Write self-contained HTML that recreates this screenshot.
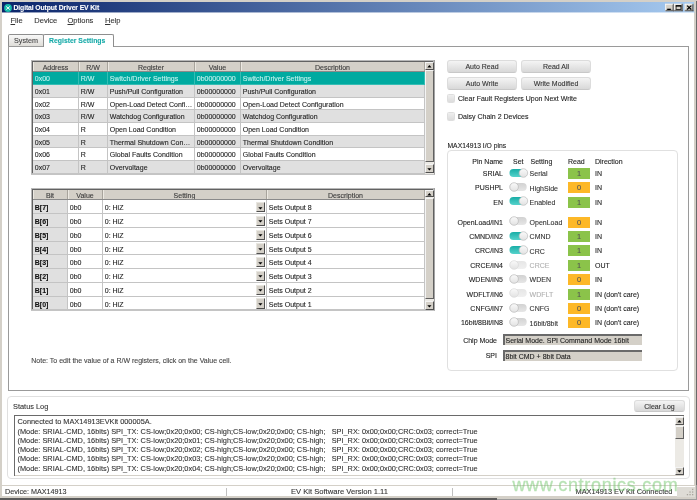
<!DOCTYPE html><html><head><meta charset="utf-8"><title>Digital Output Driver EV Kit</title><style>
*{box-sizing:border-box;margin:0;padding:0}
html,body{width:697px;height:500px;overflow:hidden;background:#fff}
body{position:relative;font-family:"Liberation Sans",Arial,sans-serif;font-size:7px;color:#222;-webkit-text-stroke:0.1px currentColor}
.a{position:absolute;white-space:nowrap}
.fr{background:#d4d0c8}
.bottom{left:0;top:498.4px;width:497px;height:2px;background:#5b5b5b}
.title{left:2px;top:2px;width:692.4px;height:10.4px;background:linear-gradient(90deg,#0a246a,#a6caf0)}
.title span{position:absolute;left:11.5px;top:0.6px;line-height:10.4px;font-size:6.8px;font-weight:bold;color:#fff;letter-spacing:-0.1px}
.wb{top:3.6px;width:8.6px;height:7.4px;background:#d4d0c8;border:1px solid;border-color:#fff #404040 #404040 #fff}
.menu{top:16px;line-height:10px;font-size:7.5px;color:#333}
.tab{border:1px solid #8e8e8e;border-bottom:none;border-radius:2px 2px 0 0;text-align:center}
.panel{left:8px;top:46px;width:681px;height:345px;border:1px solid #9a9a9a;background:#fff}
.grid{background:#b8b8b8;overflow:hidden;border-right:1px solid #a4a4a4;border-bottom:1px solid #c4c4c4}
.gi{left:1.7px;top:1.7px;background:#fff;overflow:hidden;box-shadow:-1px -1px 0 0 #626262}
.hd{background:#d4d0c8;border-bottom:1px solid #8a8a8a;left:0;top:0}
.hc{top:0;text-align:center;border-right:1px solid #a8a49c;box-shadow:inset 1px 0 0 #ece9e2;color:#3a3a3a;overflow:hidden}
.rw{left:0}
.c{top:0;height:100%;overflow:hidden;text-overflow:ellipsis;padding-left:1.8px;border-right:1px solid #c4c4c4;border-bottom:1px solid #c4c4c4}
.sel .c{border-color:#35bdb4;color:#c0f2ee}
.sb{background:#eceae5}
.sbb{left:0;width:8.6px;background:#d4d0c8;border:1px solid;border-color:#f4f4f4 #505050 #505050 #f4f4f4}
.thumb{left:0;width:8.6px;background:#d4d0c8;border:1px solid;border-color:#f4f4f4 #606060 #606060 #f4f4f4}
.btn{height:13px;border:1px solid #dcdcdc;border-bottom-color:#c8c8c8;border-radius:3px;background:linear-gradient(#f4f4f4,#d8d8d8);text-align:center;line-height:12px;font-size:7px;color:#333}
.cb{width:8px;height:9px;border:1px solid #dedede;border-radius:1.5px;background:linear-gradient(#eeeeee,#dcdcdc)}
.gb{border:1px solid #e0e0e0;border-radius:4px}
.tg{width:17.8px;height:8.6px;border-radius:4.3px}
.tg.on{background:linear-gradient(90deg,#1aa9a3,#5cc7c2)}
.tg.off{background:#d6d6d6}
.tg.dis{background:#e8e8e8}
.tg i{position:absolute;top:0;width:8.6px;height:8.6px;border-radius:50%;background:#fff;border:1px solid #bcbcbc}
.tg.dis i{border-color:#d4d4d4}
.tg.on i{right:0}.tg.off i,.tg.dis i{left:0}
.rd{left:568px;width:22px;height:11px;text-align:center;line-height:11px;font-size:7.4px;color:#555}
.g{background:#8bc34a}.o{background:#fdb827}
.tb{left:503px;width:138.5px;height:10.6px;background:#6a6a6a;font-size:7px}
.tb span{position:absolute;left:1.5px;top:1.5px;right:0;bottom:0;background:#d4d0c8;line-height:9px;padding-left:1px}
.log{left:14px;top:415px;width:670.4px;height:61px;background:#6a6a6a}
.log span{position:absolute;left:1px;top:1px;right:0;bottom:0;background:#fff;border-right:1px solid #d4d0c8;border-bottom:1px solid #d4d0c8}
.ll{left:17.5px;font-size:7.36px;line-height:9.3px;color:#333}
.sbar{left:1.6px;top:485px;width:693px;height:11.4px;border-top:1px solid #d4d0c8;background:#fff}
.t{line-height:9px;font-size:7px}
</style></head><body><div id="root" style="position:absolute;left:0;top:0;width:697px;height:500px;will-change:transform">
<svg width="0" height="0" style="position:absolute"><defs><linearGradient id="gon" x1="0" y1="0" x2="0" y2="1"><stop offset="0" stop-color="#1aaea7"/><stop offset="1" stop-color="#55d2cb"/></linearGradient><linearGradient id="gof" x1="0" y1="0" x2="0" y2="1"><stop offset="0" stop-color="#d2d2d2"/><stop offset="1" stop-color="#e6e6e6"/></linearGradient><linearGradient id="gdi" x1="0" y1="0" x2="0" y2="1"><stop offset="0" stop-color="#e6e6e6"/><stop offset="1" stop-color="#f0f0f0"/></linearGradient><linearGradient id="gk" x1="0" y1="0" x2="0" y2="1"><stop offset="0" stop-color="#fafafa"/><stop offset="1" stop-color="#e2e2e2"/></linearGradient></defs></svg>
<div class="a fr" style="left:0;top:0;width:697px;height:2.4px"></div><div class="a fr" style="left:0;top:0;width:2px;height:498.4px"></div><div class="a fr" style="left:694px;top:0;width:3px;height:498.4px"></div><div class="a fr" style="left:0;top:496.4px;width:697px;height:2px"></div><div class="a bottom"></div><div class="a" style="left:696px;top:1px;width:1px;height:484px;background:#6a6a6a"></div><div class="a" style="left:696px;top:485px;width:1px;height:15px;background:#9c9c9c"></div><div class="a" style="left:497px;top:498px;width:199px;height:1px;background:#d4d0c8"></div><div class="a" style="left:497px;top:499px;width:200px;height:1px;background:#9c9c9c"></div>
<div class="a" style="left:2px;top:12px;width:692.6px;height:1px;opacity:.45;background:linear-gradient(90deg,#0a246a,#a6caf0)"></div>
<div class="a title"><svg class="a" style="left:1.75px;top:1.6px" width="8" height="8" viewBox="0 0 8 8"><circle cx="4" cy="4" r="3.9" fill="#18bcab"/><path d="M2.2 2.4 L5.8 5.6 M5.8 2.4 L2.2 5.6" stroke="#fff" stroke-width="0.9" fill="none"/></svg><span>Digital Output Driver EV Kit</span></div>
<svg class="a" style="left:665px;top:3px" width="30" height="10" viewBox="0 -0.4 30 10"><rect x="0.3" y="0.4" width="8.7" height="7.4" fill="#d4d0c8"/><rect x="0.3" y="0.4" width="8.7" height="0.8" fill="#fff"/><rect x="0.3" y="0.4" width="0.8" height="7.4" fill="#fff"/><rect x="7.40" y="1.2000000000000002" width="0.8" height="5.80" fill="#808080"/><rect x="1.10" y="6.20" width="7.10" height="0.8" fill="#808080"/><rect x="8.20" y="0.4" width="0.8" height="7.4" fill="#404040"/><rect x="0.3" y="7.00" width="8.7" height="0.8" fill="#404040"/><rect x="8.9" y="0.4" width="8.7" height="7.4" fill="#d4d0c8"/><rect x="8.9" y="0.4" width="8.7" height="0.8" fill="#fff"/><rect x="8.9" y="0.4" width="0.8" height="7.4" fill="#fff"/><rect x="16.00" y="1.2000000000000002" width="0.8" height="5.80" fill="#808080"/><rect x="9.70" y="6.20" width="7.10" height="0.8" fill="#808080"/><rect x="16.80" y="0.4" width="0.8" height="7.4" fill="#404040"/><rect x="8.9" y="7.00" width="8.7" height="0.8" fill="#404040"/><rect x="19.7" y="0.4" width="8.7" height="7.4" fill="#d4d0c8"/><rect x="19.7" y="0.4" width="8.7" height="0.8" fill="#fff"/><rect x="19.7" y="0.4" width="0.8" height="7.4" fill="#fff"/><rect x="26.80" y="1.2000000000000002" width="0.8" height="5.80" fill="#808080"/><rect x="20.50" y="6.20" width="7.10" height="0.8" fill="#808080"/><rect x="27.60" y="0.4" width="0.8" height="7.4" fill="#404040"/><rect x="19.7" y="7.00" width="8.7" height="0.8" fill="#404040"/><rect x="2.2" y="5.3" width="3.6" height="1.3" fill="#000"/><rect x="11.1" y="2.3" width="4.8" height="3.9" fill="none" stroke="#000" stroke-width="0.7"/><rect x="10.75" y="1.9" width="5.5" height="1.3" fill="#000"/><path d="M22.1 2.2 L26.3 6.1 M26.3 2.2 L22.1 6.1" stroke="#000" stroke-width="1.15" fill="none"/></svg>
<div class="a menu" style="left:10.5px"><u>F</u>ile</div>
<div class="a menu" style="left:34.3px">Device</div>
<div class="a menu" style="left:67.5px"><u>O</u>ptions</div>
<div class="a menu" style="left:105px"><u>H</u>elp</div>
<div class="a tab" style="left:8px;top:34px;width:36px;height:12.5px;background:linear-gradient(#f8f8f8,#dddbd6);line-height:12px;font-size:7.2px;color:#444">System</div>
<div class="a panel"></div>
<div class="a tab" style="left:43px;top:33.5px;width:71px;height:13.5px;background:#fff;line-height:12.5px;font-size:6.85px;font-weight:bold;color:#16aaa8;padding-right:2.6px">Register Settings</div>
<div class="a grid" style="left:31.3px;top:60.3px;width:403.70px;height:114.42px;box-sizing:border-box"><div class="a gi" style="width:401.00px;height:111.72px">
<div class="a hd" style="width:392.00px;height:10.2px">
<div class="a hc" style="left:0.00px;width:46.00px;height:9.2px;line-height:11.399999999999999px">Address</div>
<div class="a hc" style="left:46.00px;width:29.00px;height:9.2px;line-height:11.399999999999999px">R/W</div>
<div class="a hc" style="left:75.00px;width:87.00px;height:9.2px;line-height:11.399999999999999px">Register</div>
<div class="a hc" style="left:162.00px;width:46.00px;height:9.2px;line-height:11.399999999999999px">Value</div>
<div class="a hc" style="left:208.00px;width:184.00px;height:9.2px;line-height:11.399999999999999px">Description</div>
</div>
<div class="a rw sel" style="top:10.20px;width:392.00px;height:12.69px;line-height:13.99px;background:#00aaa0">
<div class="a c" style="left:0.00px;width:46.00px;">0x00</div>
<div class="a c" style="left:46.00px;width:29.00px;">R/W</div>
<div class="a c" style="left:75.00px;width:87.00px;">Switch/Driver Settings</div>
<div class="a c" style="left:162.00px;width:46.00px;">0b00000000</div>
<div class="a c" style="left:208.00px;width:184.00px;">Switch/Driver Settings</div>
</div>
<div class="a rw " style="top:22.89px;width:392.00px;height:12.69px;line-height:13.99px;background:#e0e0e0">
<div class="a c" style="left:0.00px;width:46.00px;">0x01</div>
<div class="a c" style="left:46.00px;width:29.00px;">R/W</div>
<div class="a c" style="left:75.00px;width:87.00px;">Push/Pull Configuration</div>
<div class="a c" style="left:162.00px;width:46.00px;">0b00000000</div>
<div class="a c" style="left:208.00px;width:184.00px;">Push/Pull Configuration</div>
</div>
<div class="a rw " style="top:35.58px;width:392.00px;height:12.69px;line-height:13.99px;background:#fff">
<div class="a c" style="left:0.00px;width:46.00px;">0x02</div>
<div class="a c" style="left:46.00px;width:29.00px;">R/W</div>
<div class="a c" style="left:75.00px;width:87.00px;">Open-Load Detect Configuration</div>
<div class="a c" style="left:162.00px;width:46.00px;">0b00000000</div>
<div class="a c" style="left:208.00px;width:184.00px;">Open-Load Detect Configuration</div>
</div>
<div class="a rw " style="top:48.27px;width:392.00px;height:12.69px;line-height:13.99px;background:#e0e0e0">
<div class="a c" style="left:0.00px;width:46.00px;">0x03</div>
<div class="a c" style="left:46.00px;width:29.00px;">R/W</div>
<div class="a c" style="left:75.00px;width:87.00px;">Watchdog Configuration</div>
<div class="a c" style="left:162.00px;width:46.00px;">0b00000000</div>
<div class="a c" style="left:208.00px;width:184.00px;">Watchdog Configuration</div>
</div>
<div class="a rw " style="top:60.96px;width:392.00px;height:12.69px;line-height:13.99px;background:#fff">
<div class="a c" style="left:0.00px;width:46.00px;">0x04</div>
<div class="a c" style="left:46.00px;width:29.00px;">R</div>
<div class="a c" style="left:75.00px;width:87.00px;">Open Load Condition</div>
<div class="a c" style="left:162.00px;width:46.00px;">0b00000000</div>
<div class="a c" style="left:208.00px;width:184.00px;">Open Load Condition</div>
</div>
<div class="a rw " style="top:73.65px;width:392.00px;height:12.69px;line-height:13.99px;background:#e0e0e0">
<div class="a c" style="left:0.00px;width:46.00px;">0x05</div>
<div class="a c" style="left:46.00px;width:29.00px;">R</div>
<div class="a c" style="left:75.00px;width:87.00px;">Thermal Shutdown Condition</div>
<div class="a c" style="left:162.00px;width:46.00px;">0b00000000</div>
<div class="a c" style="left:208.00px;width:184.00px;">Thermal Shutdown Condition</div>
</div>
<div class="a rw " style="top:86.34px;width:392.00px;height:12.69px;line-height:13.99px;background:#fff">
<div class="a c" style="left:0.00px;width:46.00px;">0x06</div>
<div class="a c" style="left:46.00px;width:29.00px;">R</div>
<div class="a c" style="left:75.00px;width:87.00px;">Global Faults Condition</div>
<div class="a c" style="left:162.00px;width:46.00px;">0b00000000</div>
<div class="a c" style="left:208.00px;width:184.00px;">Global Faults Condition</div>
</div>
<div class="a rw " style="top:99.03px;width:392.00px;height:12.69px;line-height:13.99px;background:#e0e0e0">
<div class="a c" style="left:0.00px;width:46.00px;">0x07</div>
<div class="a c" style="left:46.00px;width:29.00px;">R</div>
<div class="a c" style="left:75.00px;width:87.00px;">Overvoltage</div>
<div class="a c" style="left:162.00px;width:46.00px;">0b00000000</div>
<div class="a c" style="left:208.00px;width:184.00px;">Overvoltage</div>
</div>
<div class="a sb" style="left:392.00px;top:0;width:9px;height:111.72px">
<div class="a sbb" style="top:0.2px;height:7.6px"><svg class="a" style="left:0;top:0" width="7" height="7" viewBox="0 0 7 7"><path d="M1.3 4.4 L5.5 4.4 L3.4 2.1 Z" fill="#000"/></svg></div>
<div class="a thumb" style="top:8px;height:92.22px"></div>
<div class="a sbb" style="top:102.32px;height:9px"><span class="a" style="left:0;top:0.8px"><svg class="a" style="left:0;top:0" width="7" height="7" viewBox="0 0 7 7"><path d="M1.3 2.3 L5.5 2.3 L3.4 4.6 Z" fill="#000"/></svg></span></div>
</div></div></div>
<div class="a grid" style="left:31.3px;top:188px;width:403.70px;height:123.40px;box-sizing:border-box"><div class="a gi" style="width:401.00px;height:120.70px">
<div class="a hd" style="width:392.00px;height:10.7px">
<div class="a hc" style="left:0.00px;width:35.00px;height:9.7px;line-height:11.899999999999999px">Bit</div>
<div class="a hc" style="left:35.00px;width:35.00px;height:9.7px;line-height:11.899999999999999px">Value</div>
<div class="a hc" style="left:70.00px;width:164.00px;height:9.7px;line-height:11.899999999999999px">Setting</div>
<div class="a hc" style="left:234.00px;width:158.00px;height:9.7px;line-height:11.899999999999999px">Description</div>
</div>
<div class="a rw " style="top:10.70px;width:392.00px;height:13.75px;line-height:15.05px;background:#fff">
<div class="a c" style="left:0.00px;width:35.00px;background:#e0e0e0;font-weight:bold;color:#111">B[7]</div>
<div class="a c" style="left:35.00px;width:35.00px;">0b0</div>
<div class="a c" style="left:70.00px;width:164.00px;">0: HiZ<span class="a" style="right:1px;top:1.7px;width:9px;height:10.2px;background:#d4d0c8;border:1px solid;border-color:#e8e6e0 #505050 #505050 #e8e6e0"><span class="a" style="left:0px;top:1.5px;width:7px;height:7px"><svg class="a" style="left:0;top:0" width="7" height="7" viewBox="0 0 7 7"><path d="M1.3 2.3 L5.5 2.3 L3.4 4.6 Z" fill="#000"/></svg></span></span></div>
<div class="a c" style="left:234.00px;width:158.00px;">Sets Output 8</div>
</div>
<div class="a rw " style="top:24.45px;width:392.00px;height:13.75px;line-height:15.05px;background:#fff">
<div class="a c" style="left:0.00px;width:35.00px;background:#e0e0e0;font-weight:bold;color:#111">B[6]</div>
<div class="a c" style="left:35.00px;width:35.00px;">0b0</div>
<div class="a c" style="left:70.00px;width:164.00px;">0: HiZ<span class="a" style="right:1px;top:1.7px;width:9px;height:10.2px;background:#d4d0c8;border:1px solid;border-color:#e8e6e0 #505050 #505050 #e8e6e0"><span class="a" style="left:0px;top:1.5px;width:7px;height:7px"><svg class="a" style="left:0;top:0" width="7" height="7" viewBox="0 0 7 7"><path d="M1.3 2.3 L5.5 2.3 L3.4 4.6 Z" fill="#000"/></svg></span></span></div>
<div class="a c" style="left:234.00px;width:158.00px;">Sets Output 7</div>
</div>
<div class="a rw " style="top:38.20px;width:392.00px;height:13.75px;line-height:15.05px;background:#fff">
<div class="a c" style="left:0.00px;width:35.00px;background:#e0e0e0;font-weight:bold;color:#111">B[5]</div>
<div class="a c" style="left:35.00px;width:35.00px;">0b0</div>
<div class="a c" style="left:70.00px;width:164.00px;">0: HiZ<span class="a" style="right:1px;top:1.7px;width:9px;height:10.2px;background:#d4d0c8;border:1px solid;border-color:#e8e6e0 #505050 #505050 #e8e6e0"><span class="a" style="left:0px;top:1.5px;width:7px;height:7px"><svg class="a" style="left:0;top:0" width="7" height="7" viewBox="0 0 7 7"><path d="M1.3 2.3 L5.5 2.3 L3.4 4.6 Z" fill="#000"/></svg></span></span></div>
<div class="a c" style="left:234.00px;width:158.00px;">Sets Output 6</div>
</div>
<div class="a rw " style="top:51.95px;width:392.00px;height:13.75px;line-height:15.05px;background:#fff">
<div class="a c" style="left:0.00px;width:35.00px;background:#e0e0e0;font-weight:bold;color:#111">B[4]</div>
<div class="a c" style="left:35.00px;width:35.00px;">0b0</div>
<div class="a c" style="left:70.00px;width:164.00px;">0: HiZ<span class="a" style="right:1px;top:1.7px;width:9px;height:10.2px;background:#d4d0c8;border:1px solid;border-color:#e8e6e0 #505050 #505050 #e8e6e0"><span class="a" style="left:0px;top:1.5px;width:7px;height:7px"><svg class="a" style="left:0;top:0" width="7" height="7" viewBox="0 0 7 7"><path d="M1.3 2.3 L5.5 2.3 L3.4 4.6 Z" fill="#000"/></svg></span></span></div>
<div class="a c" style="left:234.00px;width:158.00px;">Sets Output 5</div>
</div>
<div class="a rw " style="top:65.70px;width:392.00px;height:13.75px;line-height:15.05px;background:#fff">
<div class="a c" style="left:0.00px;width:35.00px;background:#e0e0e0;font-weight:bold;color:#111">B[3]</div>
<div class="a c" style="left:35.00px;width:35.00px;">0b0</div>
<div class="a c" style="left:70.00px;width:164.00px;">0: HiZ<span class="a" style="right:1px;top:1.7px;width:9px;height:10.2px;background:#d4d0c8;border:1px solid;border-color:#e8e6e0 #505050 #505050 #e8e6e0"><span class="a" style="left:0px;top:1.5px;width:7px;height:7px"><svg class="a" style="left:0;top:0" width="7" height="7" viewBox="0 0 7 7"><path d="M1.3 2.3 L5.5 2.3 L3.4 4.6 Z" fill="#000"/></svg></span></span></div>
<div class="a c" style="left:234.00px;width:158.00px;">Sets Output 4</div>
</div>
<div class="a rw " style="top:79.45px;width:392.00px;height:13.75px;line-height:15.05px;background:#fff">
<div class="a c" style="left:0.00px;width:35.00px;background:#e0e0e0;font-weight:bold;color:#111">B[2]</div>
<div class="a c" style="left:35.00px;width:35.00px;">0b0</div>
<div class="a c" style="left:70.00px;width:164.00px;">0: HiZ<span class="a" style="right:1px;top:1.7px;width:9px;height:10.2px;background:#d4d0c8;border:1px solid;border-color:#e8e6e0 #505050 #505050 #e8e6e0"><span class="a" style="left:0px;top:1.5px;width:7px;height:7px"><svg class="a" style="left:0;top:0" width="7" height="7" viewBox="0 0 7 7"><path d="M1.3 2.3 L5.5 2.3 L3.4 4.6 Z" fill="#000"/></svg></span></span></div>
<div class="a c" style="left:234.00px;width:158.00px;">Sets Output 3</div>
</div>
<div class="a rw " style="top:93.20px;width:392.00px;height:13.75px;line-height:15.05px;background:#fff">
<div class="a c" style="left:0.00px;width:35.00px;background:#e0e0e0;font-weight:bold;color:#111">B[1]</div>
<div class="a c" style="left:35.00px;width:35.00px;">0b0</div>
<div class="a c" style="left:70.00px;width:164.00px;">0: HiZ<span class="a" style="right:1px;top:1.7px;width:9px;height:10.2px;background:#d4d0c8;border:1px solid;border-color:#e8e6e0 #505050 #505050 #e8e6e0"><span class="a" style="left:0px;top:1.5px;width:7px;height:7px"><svg class="a" style="left:0;top:0" width="7" height="7" viewBox="0 0 7 7"><path d="M1.3 2.3 L5.5 2.3 L3.4 4.6 Z" fill="#000"/></svg></span></span></div>
<div class="a c" style="left:234.00px;width:158.00px;">Sets Output 2</div>
</div>
<div class="a rw " style="top:106.95px;width:392.00px;height:13.75px;line-height:15.05px;background:#fff">
<div class="a c" style="left:0.00px;width:35.00px;background:#e0e0e0;font-weight:bold;color:#111">B[0]</div>
<div class="a c" style="left:35.00px;width:35.00px;">0b0</div>
<div class="a c" style="left:70.00px;width:164.00px;">0: HiZ<span class="a" style="right:1px;top:1.7px;width:9px;height:10.2px;background:#d4d0c8;border:1px solid;border-color:#e8e6e0 #505050 #505050 #e8e6e0"><span class="a" style="left:0px;top:1.5px;width:7px;height:7px"><svg class="a" style="left:0;top:0" width="7" height="7" viewBox="0 0 7 7"><path d="M1.3 2.3 L5.5 2.3 L3.4 4.6 Z" fill="#000"/></svg></span></span></div>
<div class="a c" style="left:234.00px;width:158.00px;">Sets Output 1</div>
</div>
<div class="a sb" style="left:392.00px;top:0;width:9px;height:120.70px">
<div class="a sbb" style="top:0.2px;height:7.6px"><svg class="a" style="left:0;top:0" width="7" height="7" viewBox="0 0 7 7"><path d="M1.3 4.4 L5.5 4.4 L3.4 2.1 Z" fill="#000"/></svg></div>
<div class="a thumb" style="top:8px;height:101.20px"></div>
<div class="a sbb" style="top:111.30px;height:9px"><span class="a" style="left:0;top:0.8px"><svg class="a" style="left:0;top:0" width="7" height="7" viewBox="0 0 7 7"><path d="M1.3 2.3 L5.5 2.3 L3.4 4.6 Z" fill="#000"/></svg></span></div>
</div></div></div>
<div class="a t" style="left:31.3px;top:356px;font-size:7px;color:#444">Note: To edit the value of a R/W registers, click on the Value cell.</div>
<div class="a btn" style="left:447px;top:60px;width:70px">Auto Read</div>
<div class="a btn" style="left:521px;top:60px;width:70px">Read All</div>
<div class="a btn" style="left:447px;top:77px;width:70px">Auto Write</div>
<div class="a btn" style="left:521px;top:77px;width:70px">Write Modified</div>
<div class="a cb" style="left:447px;top:94px"></div><div class="a t" style="left:458px;top:93.7px">Clear Fault Registers Upon Next Write</div>
<div class="a cb" style="left:447px;top:111.5px"></div><div class="a t" style="left:458px;top:111.5px">Daisy Chain 2 Devices</div>
<div class="a t" style="left:447.5px;top:140.7px;font-size:6.75px">MAX14913 I/O pins</div>
<div class="a gb" style="left:447px;top:150.4px;width:231px;height:220.6px"></div>
<div class="a t" style="right:194px;top:157px">Pin Name</div>
<div class="a t" style="left:513px;top:157px">Set</div>
<div class="a t" style="left:530.5px;top:157px">Setting</div>
<div class="a t" style="left:568px;top:157px">Read</div>
<div class="a t" style="left:595px;top:157px">Direction</div>
<div class="a t" style="right:194px;top:168.8px">SRIAL</div>
<svg class="a" style="left:509px;top:167.6px" width="20" height="10" viewBox="0 0 20 10"><rect x="0.5" y="1.1" width="17.2" height="7.8" rx="3.9" fill="url(#gon)"/><circle cx="14.4" cy="5" r="4.3" fill="url(#gk)" stroke="#b8b8b8" stroke-width="0.65"/></svg>
<div class="a t" style="left:529.6px;top:169.0px;color:#333">Serial</div>
<div class="a rd g" style="top:167.8px">1</div>
<div class="a t" style="left:595px;top:168.8px">IN</div>
<div class="a t" style="right:194px;top:183.3px">PUSHPL</div>
<svg class="a" style="left:509px;top:182.1px" width="20" height="10" viewBox="0 0 20 10"><rect x="0.5" y="1.1" width="17.2" height="7.8" rx="3.9" fill="url(#gof)"/><circle cx="5.1" cy="5" r="4.3" fill="url(#gk)" stroke="#b8b8b8" stroke-width="0.65"/></svg>
<div class="a t" style="left:529.6px;top:183.5px;color:#333">HighSide</div>
<div class="a rd o" style="top:182.3px">0</div>
<div class="a t" style="left:595px;top:183.3px">IN</div>
<div class="a t" style="right:194px;top:197.6px">EN</div>
<svg class="a" style="left:509px;top:196.4px" width="20" height="10" viewBox="0 0 20 10"><rect x="0.5" y="1.1" width="17.2" height="7.8" rx="3.9" fill="url(#gon)"/><circle cx="14.4" cy="5" r="4.3" fill="url(#gk)" stroke="#b8b8b8" stroke-width="0.65"/></svg>
<div class="a t" style="left:529.6px;top:197.79999999999998px;color:#333">Enabled</div>
<div class="a rd g" style="top:196.6px">1</div>
<div class="a t" style="left:595px;top:197.6px">IN</div>
<div class="a t" style="right:194px;top:217.5px">OpenLoad/IN1</div>
<svg class="a" style="left:509px;top:216.3px" width="20" height="10" viewBox="0 0 20 10"><rect x="0.5" y="1.1" width="17.2" height="7.8" rx="3.9" fill="url(#gof)"/><circle cx="5.1" cy="5" r="4.3" fill="url(#gk)" stroke="#b8b8b8" stroke-width="0.65"/></svg>
<div class="a t" style="left:529.6px;top:217.7px;color:#333">OpenLoad</div>
<div class="a rd o" style="top:216.5px">0</div>
<div class="a t" style="left:595px;top:217.5px">IN</div>
<div class="a t" style="right:194px;top:231.9px">CMND/IN2</div>
<svg class="a" style="left:509px;top:230.7px" width="20" height="10" viewBox="0 0 20 10"><rect x="0.5" y="1.1" width="17.2" height="7.8" rx="3.9" fill="url(#gon)"/><circle cx="14.4" cy="5" r="4.3" fill="url(#gk)" stroke="#b8b8b8" stroke-width="0.65"/></svg>
<div class="a t" style="left:529.6px;top:232.1px;color:#333">CMND</div>
<div class="a rd g" style="top:230.9px">1</div>
<div class="a t" style="left:595px;top:231.9px">IN</div>
<div class="a t" style="right:194px;top:246.3px">CRC/IN3</div>
<svg class="a" style="left:509px;top:245.1px" width="20" height="10" viewBox="0 0 20 10"><rect x="0.5" y="1.1" width="17.2" height="7.8" rx="3.9" fill="url(#gon)"/><circle cx="14.4" cy="5" r="4.3" fill="url(#gk)" stroke="#b8b8b8" stroke-width="0.65"/></svg>
<div class="a t" style="left:529.6px;top:246.5px;color:#333">CRC</div>
<div class="a rd g" style="top:245.3px">1</div>
<div class="a t" style="left:595px;top:246.3px">IN</div>
<div class="a t" style="right:194px;top:260.7px">CRCE/IN4</div>
<svg class="a" style="left:509px;top:259.5px" width="20" height="10" viewBox="0 0 20 10"><rect x="0.5" y="1.1" width="17.2" height="7.8" rx="3.9" fill="url(#gdi)"/><circle cx="5.1" cy="5" r="4.3" fill="url(#gk)" stroke="#d8d8d8" stroke-width="0.65"/></svg>
<div class="a t" style="left:529.6px;top:260.9px;color:#b0b0b0">CRCE</div>
<div class="a rd g" style="top:259.7px">1</div>
<div class="a t" style="left:595px;top:260.7px">OUT</div>
<div class="a t" style="right:194px;top:275.1px">WDEN/IN5</div>
<svg class="a" style="left:509px;top:273.9px" width="20" height="10" viewBox="0 0 20 10"><rect x="0.5" y="1.1" width="17.2" height="7.8" rx="3.9" fill="url(#gof)"/><circle cx="5.1" cy="5" r="4.3" fill="url(#gk)" stroke="#b8b8b8" stroke-width="0.65"/></svg>
<div class="a t" style="left:529.6px;top:275.3px;color:#333">WDEN</div>
<div class="a rd o" style="top:274.1px">0</div>
<div class="a t" style="left:595px;top:275.1px">IN</div>
<div class="a t" style="right:194px;top:289.5px">WDFLT/IN6</div>
<svg class="a" style="left:509px;top:288.3px" width="20" height="10" viewBox="0 0 20 10"><rect x="0.5" y="1.1" width="17.2" height="7.8" rx="3.9" fill="url(#gdi)"/><circle cx="5.1" cy="5" r="4.3" fill="url(#gk)" stroke="#d8d8d8" stroke-width="0.65"/></svg>
<div class="a t" style="left:529.6px;top:289.7px;color:#b0b0b0">WDFLT</div>
<div class="a rd g" style="top:288.5px">1</div>
<div class="a t" style="left:595px;top:289.5px">IN (don't care)</div>
<div class="a t" style="right:194px;top:303.9px">CNFG/IN7</div>
<svg class="a" style="left:509px;top:302.7px" width="20" height="10" viewBox="0 0 20 10"><rect x="0.5" y="1.1" width="17.2" height="7.8" rx="3.9" fill="url(#gof)"/><circle cx="5.1" cy="5" r="4.3" fill="url(#gk)" stroke="#b8b8b8" stroke-width="0.65"/></svg>
<div class="a t" style="left:529.6px;top:304.09999999999997px;color:#333">CNFG</div>
<div class="a rd o" style="top:302.9px">0</div>
<div class="a t" style="left:595px;top:303.9px">IN (don't care)</div>
<div class="a t" style="right:194px;top:318.3px">16bit/8Bit/IN8</div>
<svg class="a" style="left:509px;top:317.1px" width="20" height="10" viewBox="0 0 20 10"><rect x="0.5" y="1.1" width="17.2" height="7.8" rx="3.9" fill="url(#gof)"/><circle cx="5.1" cy="5" r="4.3" fill="url(#gk)" stroke="#b8b8b8" stroke-width="0.65"/></svg>
<div class="a t" style="left:529.6px;top:318.5px;color:#333">16bit/8bit</div>
<div class="a rd o" style="top:317.3px">0</div>
<div class="a t" style="left:595px;top:318.3px">IN (don't care)</div>
<div class="a t" style="right:200px;top:336px">Chip Mode</div>
<div class="a tb" style="top:334.4px"><span>Serial Mode. SPI Command Mode 16bit</span></div>
<div class="a t" style="right:200px;top:351px">SPI</div>
<div class="a tb" style="top:350.3px"><span>8bit CMD + 8bit Data</span></div>
<div class="a gb" style="left:7px;top:396px;width:682.5px;height:83.4px;border-radius:4px"></div>
<div class="a" style="left:13px;top:402px;line-height:10px;font-size:7.4px;color:#333">Status Log</div>
<div class="a btn" style="left:634px;top:400px;width:51px;height:12.4px;line-height:11.4px">Clear Log</div>
<div class="a log"><span></span></div>
<div class="a ll" id="l0" style="top:416.7px">Connected to MAX14913EVKit 000005A.</div>
<div class="a ll" id="l1" style="top:426.5px">(Mode: SRIAL-CMD, 16bits) SPI_TX: CS-low;0x20;0x00; CS-high;CS-low;0x20;0x00; CS-high;&nbsp;&nbsp; SPI_RX: 0x00;0x00;CRC:0x03; correct=True</div>
<div class="a ll" id="l2" style="top:435.8px">(Mode: SRIAL-CMD, 16bits) SPI_TX: CS-low;0x20;0x01; CS-high;CS-low;0x20;0x00; CS-high;&nbsp;&nbsp; SPI_RX: 0x00;0x00;CRC:0x03; correct=True</div>
<div class="a ll" id="l3" style="top:445.1px">(Mode: SRIAL-CMD, 16bits) SPI_TX: CS-low;0x20;0x02; CS-high;CS-low;0x20;0x00; CS-high;&nbsp;&nbsp; SPI_RX: 0x00;0x00;CRC:0x03; correct=True</div>
<div class="a ll" id="l4" style="top:454.40000000000003px">(Mode: SRIAL-CMD, 16bits) SPI_TX: CS-low;0x20;0x03; CS-high;CS-low;0x20;0x00; CS-high;&nbsp;&nbsp; SPI_RX: 0x00;0x00;CRC:0x03; correct=True</div>
<div class="a ll" id="l5" style="top:463.7px">(Mode: SRIAL-CMD, 16bits) SPI_TX: CS-low;0x20;0x04; CS-high;CS-low;0x20;0x00; CS-high;&nbsp;&nbsp; SPI_RX: 0x00;0x00;CRC:0x03; correct=True</div>
<div class="a sb" style="left:675px;top:416.6px;width:8.6px;height:58.6px">
<div class="a sbb" style="top:0;height:8.6px"><span class="a" style="left:0;top:0.6px"><svg class="a" style="left:0;top:0" width="7" height="7" viewBox="0 0 7 7"><path d="M1.3 4.4 L5.5 4.4 L3.4 2.1 Z" fill="#000"/></svg></span></div><div class="a thumb" style="top:9px;height:13px"></div><div class="a sbb" style="top:50px;height:8.6px"><span class="a" style="left:0;top:0.6px"><svg class="a" style="left:0;top:0" width="7" height="7" viewBox="0 0 7 7"><path d="M1.3 2.3 L5.5 2.3 L3.4 4.6 Z" fill="#000"/></svg></span></div></div>
<div class="a sbar"></div>
<div class="a" style="left:5px;top:486.5px;line-height:10px;font-size:7.2px;color:#333">Device: MAX14913</div>
<div class="a" style="left:291px;top:486.5px;line-height:10px;font-size:7.6px;color:#333">EV Kit Software Version 1.11</div>
<div class="a" style="left:575.5px;top:486.7px;line-height:10px;font-size:7.4px;color:#333">MAX14913 EV Kit Connected</div>
<div class="a" style="left:225.5px;top:487.5px;width:1px;height:8px;background:#c0c0c0"></div>
<div class="a" style="left:451.5px;top:487.5px;width:1px;height:8px;background:#c0c0c0"></div>
<div class="a" style="left:677px;top:486.5px;width:17.6px;height:10px;background:#dedcd6"></div><svg class="a" style="left:686px;top:488px" width="9" height="9" viewBox="0 0 9 9"><g fill="#a8a49c"><rect x="6" y="6" width="1.3" height="1.3"/><rect x="3.4" y="6" width="1.3" height="1.3"/><rect x="6" y="3.4" width="1.3" height="1.3"/><rect x="0.8" y="6" width="1.3" height="1.3"/><rect x="3.4" y="3.4" width="1.3" height="1.3"/><rect x="6" y="0.8" width="1.3" height="1.3"/></g></svg>
<div class="a" id="wm" style="left:512.4px;top:474.1px;line-height:22px;font-size:18px;letter-spacing:0.7px;color:#72c66c;-webkit-text-stroke:0.35px #72c66c;opacity:.5">www.cntronics.com</div>
</div></body></html>
